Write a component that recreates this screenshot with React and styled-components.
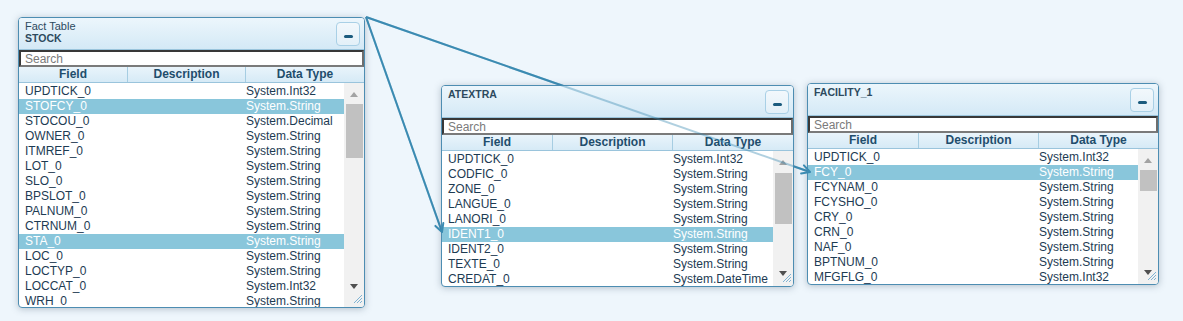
import React from 'react'
import styled, { createGlobalStyle } from 'styled-components'

const GlobalStyle = createGlobalStyle`
  html, body {
    margin: 0;
    padding: 0;
    background: #eef6fc;
    font-family: "Liberation Sans", Arial, sans-serif;
  }
`

const LINE = '#3b8bb2'

const tables = [
  {
    id: 'stock',
    x: 18, y: 17, w: 347, h: 291,
    subtitle: 'Fact Table',
    title: 'STOCK',
    cols: [108, 118],
    thumb: { top: 21, height: 54 },
    arrowBottom: 18,
    selected: [1, 10],
    rows: [
      ['UPDTICK_0', 'System.Int32'],
      ['STOFCY_0', 'System.String'],
      ['STOCOU_0', 'System.Decimal'],
      ['OWNER_0', 'System.String'],
      ['ITMREF_0', 'System.String'],
      ['LOT_0', 'System.String'],
      ['SLO_0', 'System.String'],
      ['BPSLOT_0', 'System.String'],
      ['PALNUM_0', 'System.String'],
      ['CTRNUM_0', 'System.String'],
      ['STA_0', 'System.String'],
      ['LOC_0', 'System.String'],
      ['LOCTYP_0', 'System.String'],
      ['LOCCAT_0', 'System.Int32'],
      ['WRH_0', 'System.String'],
    ],
  },
  {
    id: 'atextra',
    x: 441, y: 85, w: 353, h: 202,
    title: 'ATEXTRA',
    cols: [110, 120],
    thumb: { top: 22, height: 51 },
    arrowBottom: 10,
    selected: [5],
    rows: [
      ['UPDTICK_0', 'System.Int32'],
      ['CODFIC_0', 'System.String'],
      ['ZONE_0', 'System.String'],
      ['LANGUE_0', 'System.String'],
      ['LANORI_0', 'System.String'],
      ['IDENT1_0', 'System.String'],
      ['IDENT2_0', 'System.String'],
      ['TEXTE_0', 'System.String'],
      ['CREDAT_0', 'System.DateTime'],
    ],
  },
  {
    id: 'facility',
    x: 807, y: 83, w: 352, h: 202,
    title: 'FACILITY_1',
    cols: [110, 120],
    thumb: { top: 21, height: 21 },
    arrowBottom: 9,
    selected: [1],
    rows: [
      ['UPDTICK_0', 'System.Int32'],
      ['FCY_0', 'System.String'],
      ['FCYNAM_0', 'System.String'],
      ['FCYSHO_0', 'System.String'],
      ['CRY_0', 'System.String'],
      ['CRN_0', 'System.String'],
      ['NAF_0', 'System.String'],
      ['BPTNUM_0', 'System.String'],
      ['MFGFLG_0', 'System.Int32'],
    ],
  },
]

// relations between the tables: start point, arrow tip and the two arms of the arrow
const links = [
  { from: [366, 17], to: [442, 232], arms: [[443.3, 223.1], [435.4, 225.9]] },
  { from: [366, 17], to: [810, 172], arms: [[803.9, 165.4], [801.1, 173.4]] },
]

function App() {
  return (
    <Canvas>
      <GlobalStyle />
      <Links $layer={0}>
        {links.map((l, i) => (
          <line key={i} x1={l.from[0]} y1={l.from[1]} x2={l.to[0]} y2={l.to[1]} stroke={LINE} strokeWidth="2" />
        ))}
      </Links>

      {tables.map(t => (
        <TablePanel key={t.id} table={t} />
      ))}

      {/* faded copy so the relations still show through the panels */}
      <Links $layer={2}>
        <g opacity="0.4">
          {links.map((l, i) => (
            <line key={i} x1={l.from[0]} y1={l.from[1]} x2={l.to[0]} y2={l.to[1]} stroke={LINE} strokeWidth="2" />
          ))}
        </g>
        {links.map((l, i) => (
          <polyline
            key={i}
            points={`${l.arms[0].join(',')} ${l.to.join(',')} ${l.arms[1].join(',')}`}
            fill="none"
            stroke={LINE}
            strokeWidth="2"
            strokeLinecap="round"
            strokeLinejoin="round"
          />
        ))}
      </Links>
    </Canvas>
  )
}

function TablePanel({ table }) {
  const { cols } = table
  return (
    <Panel $x={table.x} $y={table.y} $w={table.w} $h={table.h}>
      <PanelHeader>
        <TitleBlock>
          {table.subtitle && <Subtitle>{table.subtitle}</Subtitle>}
          <Title>{table.title}</Title>
        </TitleBlock>
        <MinButton aria-label="minimize">
          <Dash />
        </MinButton>
      </PanelHeader>

      <SearchBox placeholder="Search" />

      <ColumnHeader $cols={cols}>
        <HeadCell>Field</HeadCell>
        <HeadCell $sep>Description</HeadCell>
        <HeadCell $sep>Data Type</HeadCell>
      </ColumnHeader>

      <Body>
        <List>
          {table.rows.map((r, i) => (
            <Row key={r[0]} $cols={cols} $selected={table.selected.includes(i)}>
              <FieldCell>{r[0]}</FieldCell>
              <span />
              <TypeCell>{r[1]}</TypeCell>
            </Row>
          ))}
        </List>
        <Scrollbar>
          <UpArrow />
          <Thumb $top={table.thumb.top} $height={table.thumb.height} />
          <DownArrow $bottom={table.arrowBottom} />
        </Scrollbar>
        <Grip width="10" height="10" viewBox="0 0 10 10">
          <path d="M9 1 L1 9 M9 4 L4 9 M9 7 L7 9" stroke="#7fb3d3" strokeWidth="1" />
        </Grip>
      </Body>
    </Panel>
  )
}

export default App

const Canvas = styled.div`
  position: relative;
  width: 1183px;
  height: 321px;
  overflow: hidden;
  background: #eef6fc;
`

const Links = styled.svg.attrs({ width: 1183, height: 321 })`
  position: absolute;
  left: 0;
  top: 0;
  z-index: ${p => p.$layer};
  pointer-events: none;
`

const Panel = styled.div`
  position: absolute;
  z-index: 1;
  left: ${p => p.$x}px;
  top: ${p => p.$y}px;
  width: ${p => p.$w}px;
  height: ${p => p.$h}px;
  box-sizing: border-box;
  border: 1px solid #4d8db2;
  border-radius: 4px;
  background: #ffffff;
  box-shadow: 0 1px 7px rgba(70, 90, 110, 0.35);
  display: flex;
  flex-direction: column;
  overflow: hidden;
`

const PanelHeader = styled.div`
  height: 32px;
  flex: none;
  box-sizing: border-box;
  display: flex;
  justify-content: space-between;
  align-items: center;
  padding: 0 4px 0 6px;
  background: linear-gradient(#ecf6fc, #d4e9f6);
  border-bottom: 1px solid #9ac4dc;
`

const TitleBlock = styled.div`
  align-self: flex-start;
  padding-top: 2px;
  display: flex;
  flex-direction: column;
  color: #2d4a5e;
  font-size: 11px;
  line-height: 12px;
`

const Subtitle = styled.div`
  font-weight: normal;
`

const Title = styled.div`
  font-weight: bold;
  font-size: 10.5px;
`

const MinButton = styled.div`
  width: 24px;
  height: 24px;
  box-sizing: border-box;
  border: 1px solid #a9d0e6;
  border-radius: 4px;
  background: linear-gradient(#f2f8fc, #e3f0f8);
  display: flex;
  justify-content: center;
  align-items: flex-end;
  padding-bottom: 7px;
`

const Dash = styled.div`
  width: 9px;
  height: 3px;
  border-radius: 2px;
  background: #1b5b7e;
`

const SearchBox = styled.input`
  flex: none;
  width: 100%;
  height: 17px;
  box-sizing: border-box;
  margin: 0;
  padding: 0 4px;
  border: 2px solid;
  border-color: #383838 #6e6e6e #7a7a7a #383838;
  background: #ffffff;
  font-family: "Liberation Sans", Arial, sans-serif;
  font-size: 12px;
  outline: none;

  &::placeholder {
    color: #7b7b7b;
  }
`

const ColumnHeader = styled.div`
  flex: none;
  height: 16px;
  box-sizing: border-box;
  display: grid;
  grid-template-columns: ${p => `${p.$cols[0]}px ${p.$cols[1]}px 1fr`};
  background: linear-gradient(#e9f4fb, #d6eaf6);
  border-bottom: 1px solid #9ac4dc;
`

const HeadCell = styled.div`
  text-align: center;
  font-size: 12px;
  font-weight: bold;
  line-height: 15px;
  color: #1f4d6c;
  border-left: ${p => (p.$sep ? '1px solid #a6cde2' : 'none')};
`

const Body = styled.div`
  position: relative;
  flex: 1;
  min-height: 0;
  display: flex;
`

const List = styled.div`
  flex: 1;
  min-width: 0;
  padding-top: 1px;
  overflow: hidden;
`

const Row = styled.div`
  display: grid;
  grid-template-columns: ${p => `${p.$cols[0]}px ${p.$cols[1]}px 1fr`};
  height: 15px;
  font-size: 12px;
  line-height: 15px;
  white-space: nowrap;
  color: ${p => (p.$selected ? '#ffffff' : '#1d3b53')};
  background: ${p => (p.$selected ? '#89c6db' : 'transparent')};
`

const FieldCell = styled.span`
  padding-left: 6px;
  overflow: hidden;
`

const TypeCell = styled.span`
  padding-left: 1px;
  overflow: hidden;
`

const Scrollbar = styled.div`
  position: relative;
  flex: none;
  width: 20px;
  background: #f1f1f1;
`

const UpArrow = styled.div`
  position: absolute;
  top: 9px;
  left: 6px;
  width: 0;
  height: 0;
  border-left: 4.5px solid transparent;
  border-right: 4.5px solid transparent;
  border-bottom: 5px solid #a3a3a3;
`

const DownArrow = styled.div`
  position: absolute;
  bottom: ${p => p.$bottom}px;
  left: 6px;
  width: 0;
  height: 0;
  border-left: 4.5px solid transparent;
  border-right: 4.5px solid transparent;
  border-top: 5px solid #505050;
`

const Thumb = styled.div`
  position: absolute;
  left: 2px;
  right: 1px;
  top: ${p => p.$top}px;
  height: ${p => p.$height}px;
  background: #c1c1c1;
`

const Grip = styled.svg`
  position: absolute;
  right: 1px;
  bottom: 3px;
`
